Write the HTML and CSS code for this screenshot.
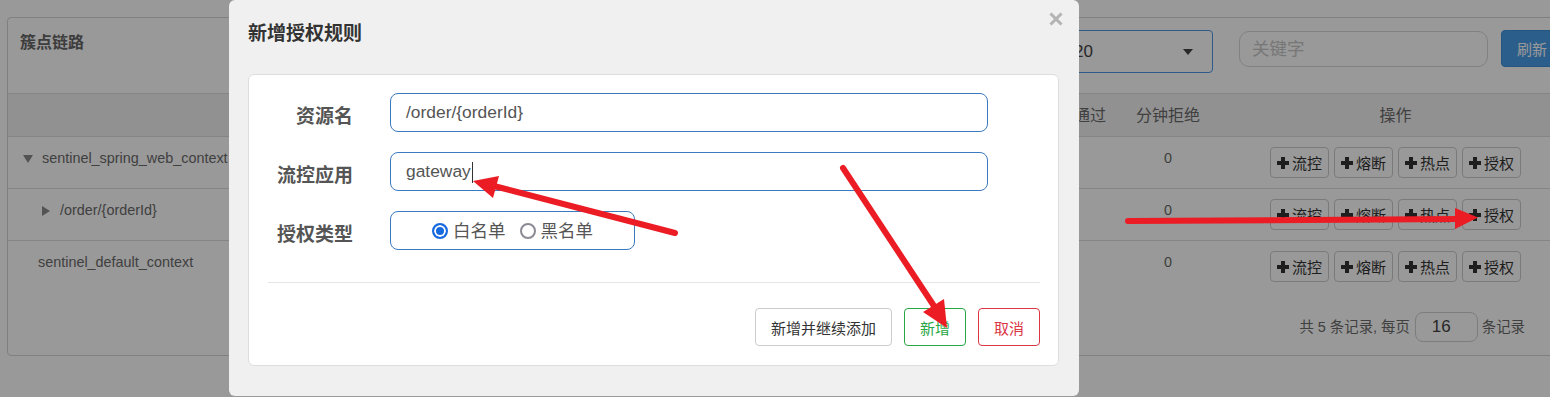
FILE: index.html
```html
<!DOCTYPE html>
<html lang="zh-CN">
<head>
    <meta charset="UTF-8">
    <title>簇点链路 - 新增授权规则</title>
    <link rel="stylesheet" href="styles.css">
</head>
<body>
    <div class="page">
        <div class="panel">
            <div class="panel-heading">
                <span class="panel-title">簇点链路</span>
                <div class="tools">
                    <div class="select">20<span class="caret-down"></span></div>
                    <div class="search">关键字</div>
                    <button class="btn-refresh">刷新</button>
                </div>
            </div>
            <table class="tree-table">
                <colgroup>
                    <col style="width: 500px"><col style="width: 130px"><col style="width: 130px"><col style="width: 130px">
                    <col style="width: 129px"><col style="width: 94px"><col style="width: 94px"><col style="width: 361px">
                </colgroup>
                <thead>
                    <tr><th>资源名</th><th>通过QPS</th><th>拒绝QPS</th><th>并发数</th><th>平均RT</th><th>分钟通过</th><th>分钟拒绝</th><th>操作</th></tr>
                </thead>
                <tbody>
                    <tr>
                        <td class="name lvl-0"><span class="tri-down"></span>sentinel_spring_web_context</td>
                        <td class="num">0</td><td class="num">0</td><td class="num">0</td><td class="num">0</td><td class="num">0</td><td class="num">0</td>
                        <td><div class="op">
                            <button class="btn-op"><span class="plus"></span>流控</button>
                            <button class="btn-op"><span class="plus"></span>熔断</button>
                            <button class="btn-op"><span class="plus"></span>热点</button>
                            <button class="btn-op"><span class="plus"></span>授权</button>
                        </div></td>
                    </tr>
                    <tr>
                        <td class="name lvl-1"><span class="tri-right"></span>/order/{orderId}</td>
                        <td class="num">0</td><td class="num">0</td><td class="num">0</td><td class="num">0</td><td class="num">0</td><td class="num">0</td>
                        <td><div class="op">
                            <button class="btn-op"><span class="plus"></span>流控</button>
                            <button class="btn-op"><span class="plus"></span>熔断</button>
                            <button class="btn-op"><span class="plus"></span>热点</button>
                            <button class="btn-op"><span class="plus"></span>授权</button>
                        </div></td>
                    </tr>
                    <tr>
                        <td class="name lvl-plain">sentinel_default_context</td>
                        <td class="num">0</td><td class="num">0</td><td class="num">0</td><td class="num">0</td><td class="num">0</td><td class="num">0</td>
                        <td><div class="op">
                            <button class="btn-op"><span class="plus"></span>流控</button>
                            <button class="btn-op"><span class="plus"></span>熔断</button>
                            <button class="btn-op"><span class="plus"></span>热点</button>
                            <button class="btn-op"><span class="plus"></span>授权</button>
                        </div></td>
                    </tr>
                </tbody>
            </table>
            <div class="pager">共 5 条记录, 每页<span class="page-size">16</span>条记录</div>
        </div>
    </div>

    <div class="backdrop"></div>

    <div class="modal">
        <div class="modal-header">
            <h4 class="modal-title">新增授权规则</h4>
            <svg class="close" width="14" height="14" viewBox="0 0 14 14">
                <path d="M1.5 1.5 L12.5 12.5 M12.5 1.5 L1.5 12.5" stroke="#b3b3b3" stroke-width="3" fill="none"/>
            </svg>
        </div>
        <div class="modal-body">
            <div class="rule-card">
                <div class="form-row">
                    <label class="control-label">资源名</label>
                    <div class="form-control">/order/{orderId}</div>
                </div>
                <div class="form-row">
                    <label class="control-label">流控应用</label>
                    <div class="form-control">gateway<span class="cursor"></span></div>
                </div>
                <div class="form-row">
                    <label class="control-label">授权类型</label>
                    <div class="radio-group">
                        <span class="radio"><span class="dot checked"></span>白名单</span>
                        <span class="radio"><span class="dot"></span>黑名单</span>
                    </div>
                </div>
                <div class="form-actions">
                    <button class="btn btn-default">新增并继续添加</button>
                    <button class="btn btn-success">新增</button>
                    <button class="btn btn-danger">取消</button>
                </div>
            </div>
        </div>
    </div>

    <!-- hand-drawn annotation arrows -->
    <svg class="marks" width="1550" height="397" viewBox="0 0 1550 397">
        <g stroke="#ec1c24" stroke-width="6" stroke-linecap="round" fill="none">
            <line x1="675" y1="233" x2="494" y2="186"/>
            <line x1="843" y1="168" x2="934" y2="306"/>
            <line x1="1128" y1="221" x2="1458" y2="219"/>
        </g>
        <g fill="#ec1c24">
            <polygon points="473,181 499,176 493,198"/>
            <polygon points="947,328 944,299 923,312"/>
            <polygon points="1478,217.5 1455,208 1455,229"/>
        </g>
    </svg>
</body>
</html>
```

FILE: styles.css
```css
* {
    box-sizing: border-box;
}
html, body {
    margin: 0;
}
body {
    position: relative;
    width: 1550px;
    height: 397px;
    overflow: hidden;
    background: #fff;
    color: #6b6b6b;
    font-family: "Liberation Sans", "Noto Sans CJK SC", sans-serif;
}
button {
    font-family: inherit;
    cursor: pointer;
}

/* background page */
.page {
    padding: 17px 0 0 7px;
}
.panel {
    width: 1570px;
    border: 1px solid #d5d5d5;
    border-radius: 4px;
}
.panel-heading {
    display: flex;
    align-items: flex-start;
    height: 76px;
    padding: 12px 13px 0 12px;
    border-bottom: 1px solid #ddd;
}
.panel-title {
    font-size: 16px;
    font-weight: bold;
    line-height: 26px;
    color: #666;
}
.tools {
    display: flex;
    align-items: flex-start;
    margin-left: auto;
}
.select {
    display: flex;
    align-items: center;
    justify-content: space-between;
    width: 152px;
    height: 43px;
    padding: 0 19px 0 12px;
    border: 1px solid #4d98e6;
    border-radius: 4px;
    font-size: 17px;
    color: #444;
}
.caret-down {
    border-left: 5px solid transparent;
    border-right: 5px solid transparent;
    border-top: 6px solid #444;
}
.search {
    width: 249px;
    height: 36px;
    margin: 1px 0 0 26px;
    padding: 0 12px;
    border: 1px solid #d8d8d8;
    border-radius: 10px;
    font-size: 17.5px;
    line-height: 34px;
    color: #c6c6c6;
}
.btn-refresh {
    height: 37px;
    margin-left: 13px;
    padding: 0 15px;
    border: 1px solid #3f8fd8;
    border-radius: 4px;
    background: #4a9de8;
    color: #fff;
    font-size: 15px;
}

.tree-table {
    width: 100%;
    table-layout: fixed;
    border-collapse: collapse;
}
.tree-table th {
    padding: 12px 0 10px;
    background: #f2f2f2;
    font-size: 16px;
    font-weight: normal;
    line-height: 20px;
    text-align: center;
    white-space: nowrap;
    overflow: hidden;
}
.tree-table td {
    padding: 10px 8px;
    border-top: 1px solid #ddd;
    vertical-align: top;
    font-size: 14.4px;
    line-height: 22px;
    white-space: nowrap;
    overflow: hidden;
}
.tree-table td.num {
    text-align: center;
}
.tree-table td.lvl-0 { padding-left: 15px; }
.tree-table td.lvl-1 { padding-left: 34px; }
.tree-table td.lvl-plain { padding-left: 30px; }

.tri-down {
    display: inline-block;
    margin-right: 9px;
    border-left: 5px solid transparent;
    border-right: 5px solid transparent;
    border-top: 8px solid #8a8a8a;
    vertical-align: middle;
}
.tri-right {
    display: inline-block;
    margin-right: 10px;
    border-top: 5px solid transparent;
    border-bottom: 5px solid transparent;
    border-left: 8px solid #8a8a8a;
    vertical-align: middle;
}

.op {
    display: flex;
    justify-content: center;
    gap: 5px;
}
.btn-op {
    display: flex;
    align-items: center;
    gap: 3px;
    height: 31px;
    padding: 0 6px;
    border: 1px solid #ccc;
    border-radius: 4px;
    background: #fff;
    color: #333;
    font-size: 15px;
}
.plus {
    position: relative;
    width: 12px;
    height: 12px;
}
.plus::before,
.plus::after {
    content: "";
    position: absolute;
    background: #333;
}
.plus::before {
    left: 0;
    top: 4px;
    width: 12px;
    height: 4px;
}
.plus::after {
    left: 4px;
    top: 0;
    width: 4px;
    height: 12px;
}

.pager {
    display: flex;
    justify-content: flex-end;
    align-items: center;
    padding: 20px 51px 13px 0;
    font-size: 14.4px;
    line-height: 20px;
    white-space: pre;
}
.page-size {
    width: 63px;
    height: 30px;
    margin: 0 4px 0 5px;
    padding-left: 16px;
    border: 1px solid #d0d0d0;
    border-radius: 8px;
    font-size: 17px;
    line-height: 28px;
    color: #444;
}

/* dialog */
.backdrop {
    position: absolute;
    inset: 0;
    background: rgba(0, 0, 0, 0.4);
}
.modal {
    position: absolute;
    left: 229px;
    top: 0;
    width: 850px;
    height: 396px;
    border-radius: 6px;
    background: #f0f0f0;
}
.modal-header {
    display: flex;
    justify-content: space-between;
    align-items: flex-start;
    height: 74px;
    padding: 22px 16px 0 19px;
}
.modal-title {
    margin: 0;
    font-size: 19px;
    font-weight: bold;
    line-height: 24px;
    color: #333;
}
.close {
    margin-top: -10px;
}
.modal-body {
    padding: 0 20px 0 19px;
}
.rule-card {
    padding: 18px 18px 19px 0;
    border: 1px solid #ddd;
    border-radius: 6px;
    background: #fff;
}
.form-row {
    display: flex;
    align-items: center;
    margin-bottom: 20px;
}
.form-row:last-of-type {
    margin-bottom: 0;
}
.control-label {
    width: 104px;
    margin-right: 37px;
    padding-top: 8px;
    font-size: 19px;
    font-weight: bold;
    line-height: 24px;
    text-align: right;
    color: #555;
}
.form-control {
    width: 598px;
    height: 39px;
    padding: 0 15px;
    border: 1px solid #3c7ac0;
    border-radius: 8px;
    font-size: 17.4px;
    line-height: 37px;
    color: #555;
}
.cursor {
    display: inline-block;
    width: 1px;
    height: 21px;
    margin-left: 1px;
    background: #333;
    vertical-align: middle;
}
.radio-group {
    display: flex;
    align-items: center;
    justify-content: center;
    gap: 14px;
    width: 245px;
    height: 39px;
    border: 1px solid #3c7ac0;
    border-radius: 8px;
    font-size: 17.5px;
    line-height: 24px;
    color: #555;
}
.radio {
    display: flex;
    align-items: center;
    gap: 5px;
}
.dot {
    width: 16px;
    height: 16px;
    border: 2px solid #8b8b95;
    border-radius: 50%;
    background: #fff;
}
.dot.checked {
    border-color: #1769e0;
    background: #1769e0;
    box-shadow: inset 0 0 0 2px #fff;
}
.form-actions {
    display: flex;
    justify-content: flex-end;
    gap: 12px;
    margin: 32px 0 0 19px;
    padding-top: 25px;
    border-top: 1px solid #e5e5e5;
}
.btn {
    height: 38px;
    padding: 0 15px;
    border: 1px solid #ccc;
    border-radius: 4px;
    background: #fff;
    font-size: 15px;
    color: #333;
}
.btn-success {
    border-color: #28a745;
    color: #28a745;
}
.btn-danger {
    border-color: #dc3545;
    color: #dc3545;
}

.marks {
    position: absolute;
    left: 0;
    top: 0;
    pointer-events: none;
}
```
